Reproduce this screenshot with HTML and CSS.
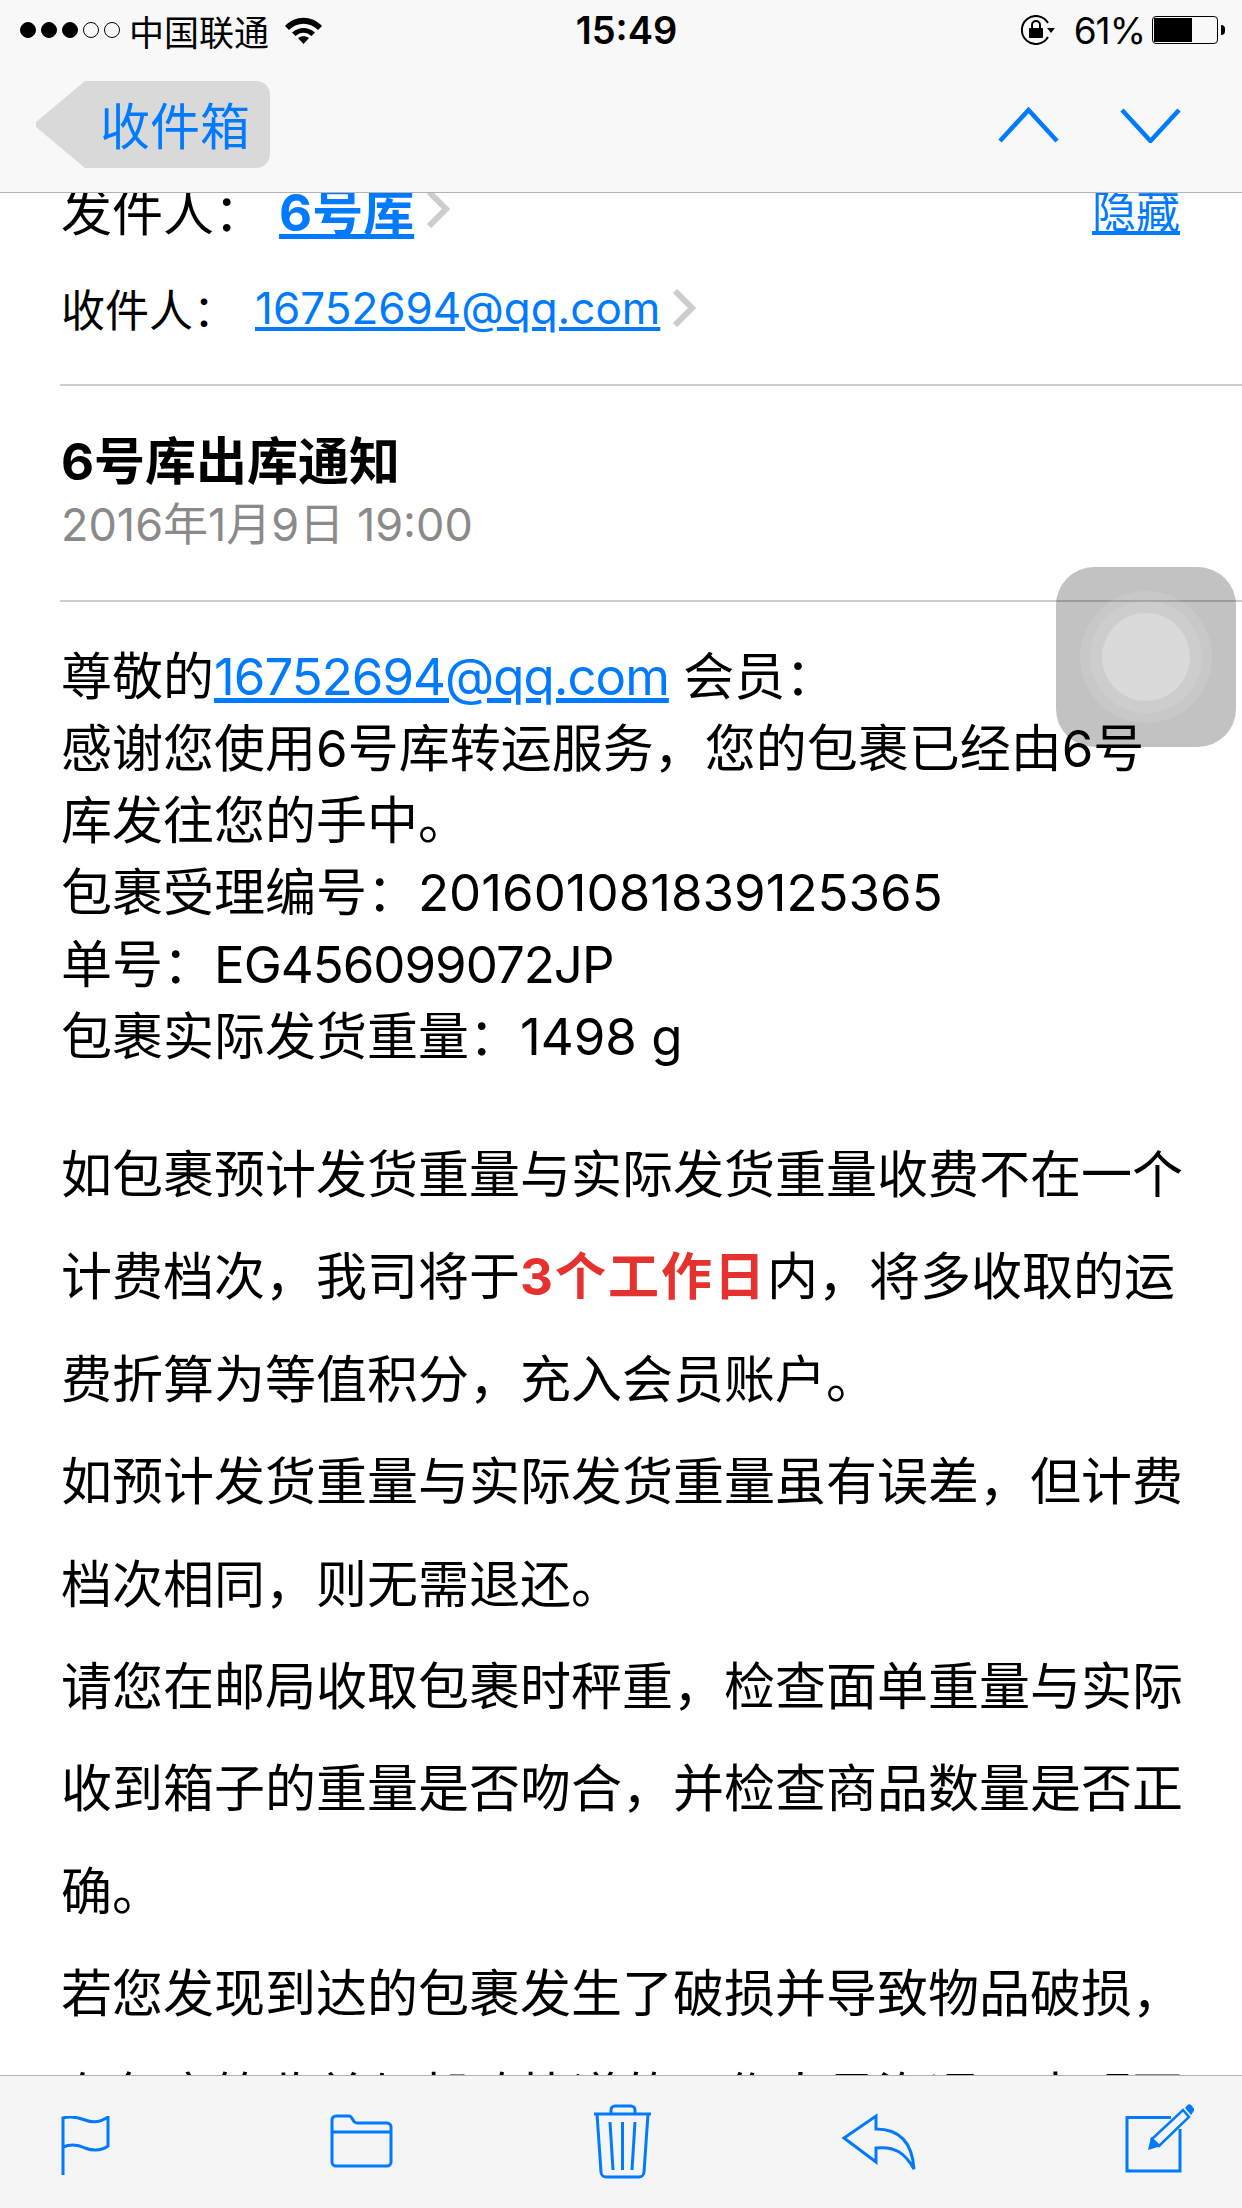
FILE: index.html
```html
<!DOCTYPE html>
<html>
<head>
  <title>收件箱</title>
  <link rel="stylesheet" href="styles.css">
</head>
<body>
  <div class="screen">
    <header class="topbar">
      <div class="status">
        <div class="status-left">
          <span class="signal">
            <i class="dot on"></i><i class="dot on"></i><i class="dot on"></i><i class="dot"></i><i class="dot"></i>
          </span>
          <span class="carrier">中国联通</span>
          <svg class="wifi" width="37" height="27" viewBox="0 0 37 27">
            <path d="M0 9C10 -2 27 -2 37 9L33 13C24.500 4.500 12.500 4.500 4 13Z"/>
            <path d="M7 15.500C14 9.500 23 9.500 30 15.500L26.500 19C21.500 14.500 15.500 14.500 10.500 19Z"/>
            <path d="M13 21C16.500 18.500 20.500 18.500 24 21L18.500 27Z"/>
          </svg>
        </div>
        <div class="clock">15:49</div>
        <div class="status-right">
          <svg class="rotlock" width="34" height="30" viewBox="0 0 34 30">
            <path class="ring" d="M27 8A14 14 0 1 0 27 22"/>
            <path d="M26 13H34L30 18Z"/>
            <path class="ring" d="M11 13V10A4 4 0 0 1 19 10V13"/>
            <rect x="8" y="13" width="14" height="10" rx="1"/>
          </svg>
          <span class="pct">61%</span>
          <span class="battery"><i class="battery-fill"></i></span>
          <i class="battery-nub"></i>
        </div>
      </div>
      <nav class="navbar">
        <a class="back">收件箱</a>
        <div class="arrows">
          <svg width="61" height="36" viewBox="0 0 61 36"><path d="M2 34L30.500 3L59 34"/></svg>
          <svg width="61" height="36" viewBox="0 0 61 36"><path d="M2 3L30.500 34L59 3"/></svg>
        </div>
      </nav>
    </header>

    <main class="content">
      <div class="mail">
        <section class="meta">
          <div class="row row-from">
            <span class="label">发件人：</span>
            <a class="from-link">6号库</a>
            <svg class="chev" width="24" height="38" viewBox="0 0 24 38"><path d="M3 2L20 19L3 36"/></svg>
            <a class="hide-link">隐藏</a>
          </div>
          <div class="row row-to">
            <span class="label">收件人：</span>
            <a class="to-link">16752694@qq.com</a>
            <svg class="chev" width="24" height="38" viewBox="0 0 24 38"><path d="M3 2L20 19L3 36"/></svg>
          </div>
        </section>

        <section class="subject">
          <h1>6号库出库通知</h1>
          <div class="date">2016年1月9日 19:00</div>
        </section>

        <section class="body">
          <div class="intro">
            尊敬的<a class="tight">16752694@qq.com</a> 会员：<br>
            感谢您使用6号库转运服务，您的包裹已经由6号库发往您的手中。<br>
            包裹受理编号：201601081839125365<br>
            单号：<span class="tight">EG456099072JP</span><br>
            包裹实际发货重量：1498 g
          </div>
          <div class="notes">
            如包裹预计发货重量与实际发货重量收费不在一个计费档次，我司将于<b>3个工作日</b>内，将多收取的运费折算为等值积分，充入会员账户。<br>
            如预计发货重量与实际发货重量虽有误差，但计费档次相同，则无需退还。<br>
            请您在邮局收取包裹时秤重，检查面单重量与实际收到箱子的重量是否吻合，并检查商品数量是否正确。<br>
            若您发现到达的包裹发生了破损并导致物品破损，在包裹箱收单与邮政快递的工作人员沟通，声明更
          </div>
        </section>
      </div>
    </main>

    <footer class="toolbar">
      <svg class="tb-flag" width="49" height="59" viewBox="0 0 49 59">
        <path d="M2 59V2C9 0 16 1 24 4C32 7 40 6 47 1V30C40 35 32 35 24 32C16 28 9 28 2 31"/>
      </svg>
      <svg class="tb-folder" width="63" height="54" viewBox="0 0 63 54">
        <path d="M2 6A4 4 0 0 1 6 2H19C23 2 22 9 27 9H57A4 4 0 0 1 61 13V48A4 4 0 0 1 57 52H6A4 4 0 0 1 2 48Z"/>
        <path d="M2 18H61"/>
      </svg>
      <svg class="tb-trash" width="57" height="75" viewBox="0 0 57 75">
        <path d="M0 10H57"/>
        <path d="M17 10V6A4 4 0 0 1 21 2H37A4 4 0 0 1 41 6V10"/>
        <path d="M3 10L7 68A5 5 0 0 0 12 73H45A5 5 0 0 0 50 68L54 10"/>
        <path d="M16 18L19 66M28.500 18V66M41 18L38 66"/>
      </svg>
      <svg class="tb-reply" width="75" height="57" viewBox="0 0 75 57">
        <path d="M35 3V16C56 16 71 27 73 56C64 40 54 33 35 35V49L3 25Z"/>
      </svg>
      <svg class="tb-compose" width="69" height="69" viewBox="0 0 69 69">
        <path d="M46 13.500H2V67H55V25"/>
        <path class="thin" d="M27 35L58 6L64 13L34 42Z"/>
        <path class="solid" d="M23 46L26 33L36 42Z"/>
        <path class="solid" d="M60 4L62.500 1C63.500 0 65 0 66 1L68.500 4C69.500 5 69.500 6.500 68.500 7.500L66 11Z"/>
      </svg>
    </footer>

    <div class="assistive">
      <div class="ring-outer">
        <div class="ring-mid">
          <div class="ring-inner"></div>
        </div>
      </div>
    </div>
  </div>
</body>
</html>
```

FILE: styles.css
```css
body {
  margin: 0;
  background: #fff;
  color: #000;
  font-family: 'Inter', 'Noto Sans CJK SC', sans-serif;
}
a {
  color: #007aff;
}
.screen {
  position: relative;
  width: 1242px;
  height: 2208px;
  display: flex;
  flex-direction: column;
  overflow: hidden;
}

/* top bars */
.topbar {
  height: 192px;
  flex: none;
  background: #f8f8f8;
  border-bottom: 1px solid #b2b2b2;
}
.status {
  height: 60px;
  padding: 0 17px 0 20px;
  display: grid;
  grid-template-columns: 1fr auto 1fr;
  align-items: center;
}
.status-left,
.status-right {
  display: flex;
  align-items: center;
}
.status-right {
  justify-content: flex-end;
}
.signal {
  display: flex;
  gap: 5px;
}
.dot {
  width: 16px;
  height: 16px;
  box-sizing: border-box;
  border: 1px solid #000;
  border-radius: 50%;
}
.dot.on {
  background: #000;
}
.carrier {
  margin-left: 9px;
  font-size: 35px;
  font-family: 'Noto Sans CJK SC', sans-serif;
}
.wifi {
  margin-left: 16px;
  fill: #000;
}
.clock {
  margin-left: 8px;
  font-size: 38px;
  font-weight: 600;
}
.rotlock {
  fill: #000;
}
.rotlock .ring {
  fill: none;
  stroke: #000;
  stroke-width: 2;
}
.pct {
  margin-left: 19px;
  font-size: 37px;
  letter-spacing: -1px;
}
.battery {
  margin-left: 7px;
  width: 66px;
  height: 28px;
  box-sizing: border-box;
  padding: 1px;
  border: 1px solid #000;
  border-radius: 4px;
}
.battery-fill {
  display: block;
  width: 38px;
  height: 24px;
  background: #000;
}
.battery-nub {
  width: 4px;
  height: 10px;
  margin-left: 3px;
  background: #000;
  border-radius: 0 5px 5px 0;
}
.navbar {
  height: 132px;
  padding: 21px 61px 0 36px;
  box-sizing: border-box;
  display: flex;
  justify-content: space-between;
  align-items: flex-start;
}
.back {
  width: 234px;
  height: 87px;
  box-sizing: border-box;
  padding-left: 64px;
  background: #d9d9d9;
  font-size: 50px;
  line-height: 85px;
  font-family: 'Noto Sans CJK SC', sans-serif;
  border-radius: 0 14px 14px 0;
  clip-path: polygon(0 47%, 0 53%, 49px 100%, 100% 100%, 100% 0, 49px 0);
}
.arrows {
  width: 183px;
  margin-top: 26px;
  display: flex;
  justify-content: space-between;
}
.arrows svg path {
  fill: none;
  stroke: #007aff;
  stroke-width: 4.500;
}

/* mail */
.content {
  flex: 1;
  min-height: 0;
  overflow: hidden;
}
.mail {
  margin-top: -30px;
  padding-left: 60px;
}
.meta {
  height: 221px;
  border-bottom: 2px solid #ccc;
}
.row {
  display: flex;
  align-items: center;
  padding-left: 1px;
}
.row-from {
  height: 92px;
}
.row-to {
  height: 106px;
}
.row .label {
  font-size: 44px;
}
.row-from .label {
  font-size: 51px;
}
.from-link {
  margin-left: 14px;
  font-size: 51px;
  font-weight: 700;
  text-decoration: underline;
}
.to-link {
  margin-left: 18px;
  font-size: 44px;
  text-decoration: underline;
}
.hide-link {
  margin-left: auto;
  margin-right: 62px;
  font-size: 44px;
  text-decoration: underline;
}
.chev {
  margin-left: 12px;
}
.chev path {
  fill: none;
  stroke: #cdcdcd;
  stroke-width: 6;
}
.subject {
  padding: 44px 0 44px 1px;
  border-bottom: 2px solid #ccc;
}
.subject h1 {
  margin: 0;
  font-size: 51px;
  line-height: 64px;
  font-weight: 700;
}
.date {
  color: #8a8a8a;
  font-size: 45px;
  line-height: 62px;
}
.body {
  padding: 39px 55px 0 1px;
  font-size: 51px;
}
.intro {
  line-height: 72px;
}
.intro a {
  text-decoration: underline;
}
.tight {
  letter-spacing: -1px;
}
.notes {
  margin-top: 51px;
  line-height: 102.400px;
}
.notes b {
  color: #e6322e;
  font-weight: 700;
  letter-spacing: 2px;
}

/* bottom bar */
.toolbar {
  height: 133px;
  flex: none;
  box-sizing: border-box;
  padding-left: 61px;
  background: #f5f5f5;
  border-top: 1px solid #b2b2b2;
  display: flex;
  align-items: flex-start;
}
.toolbar svg {
  fill: none;
  stroke: #007aff;
  stroke-width: 3;
}
.tb-flag {
  margin-top: 40px;
}
.tb-folder {
  margin: 38px 0 0 220px;
}
.tb-trash {
  margin: 28px 0 0 201px;
}
.tb-reply {
  margin: 37px 0 0 190px;
}
.tb-compose {
  margin: 28px 0 0 209px;
}
.toolbar .thin {
  stroke-width: 2.500;
}
.toolbar .solid {
  fill: #007aff;
  stroke: none;
}

/* assistive touch button, floats over the mail */
.assistive {
  position: absolute;
  left: 1056px;
  top: 567px;
  width: 180px;
  height: 180px;
  border-radius: 38px;
  background: rgba(0, 0, 0, 0.24);
  display: flex;
  align-items: center;
  justify-content: center;
}
.ring-outer,
.ring-mid,
.ring-inner {
  border-radius: 50%;
  display: flex;
  align-items: center;
  justify-content: center;
}
.ring-outer {
  width: 132px;
  height: 132px;
  background: rgba(255, 255, 255, 0.1);
}
.ring-mid {
  width: 112px;
  height: 112px;
  background: rgba(255, 255, 255, 0.1);
}
.ring-inner {
  width: 88px;
  height: 88px;
  background: #dadada;
}
```
